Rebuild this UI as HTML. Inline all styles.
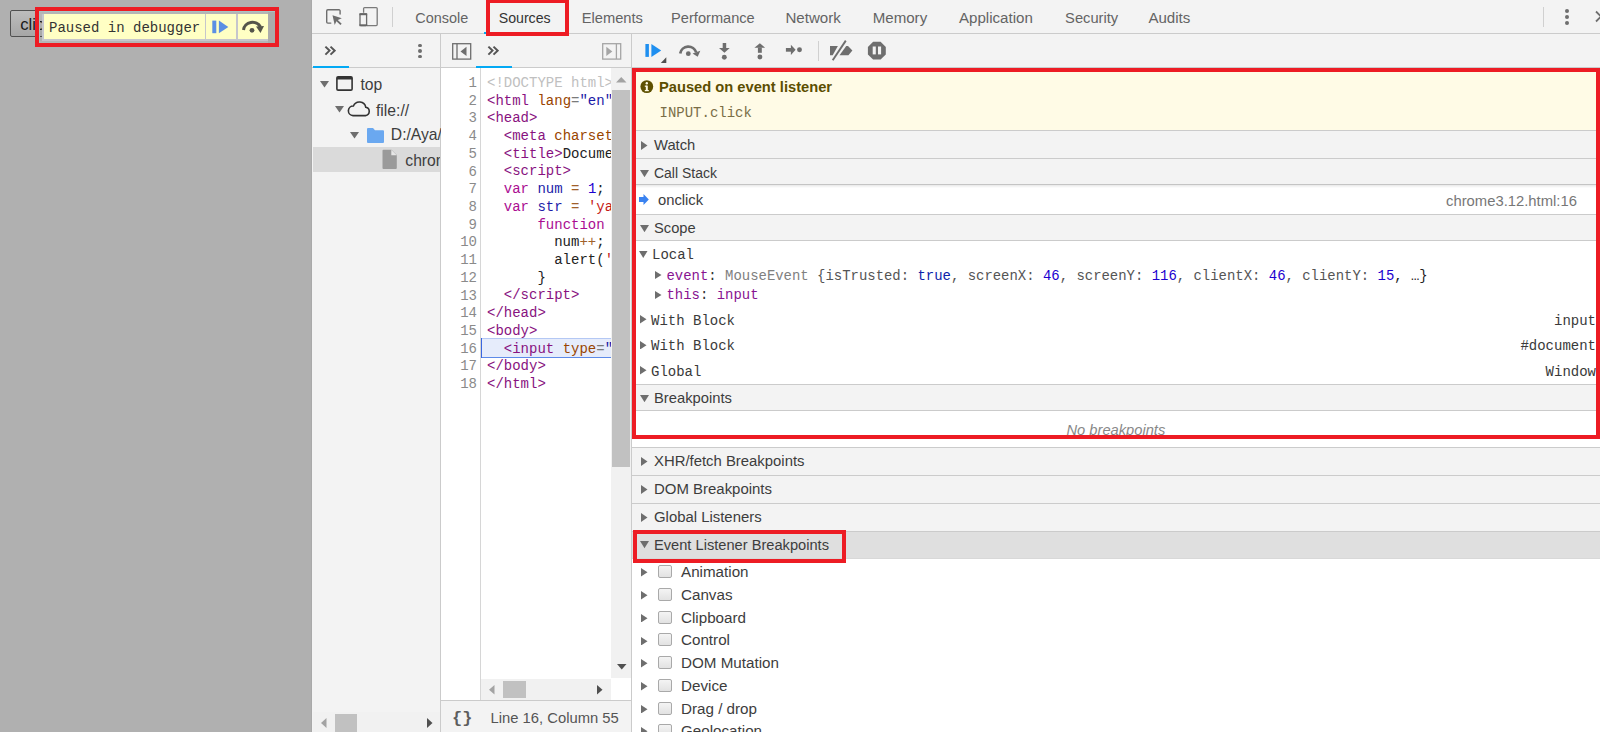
<!DOCTYPE html><html><head><meta charset="utf-8"><style>
*{margin:0;padding:0;box-sizing:border-box}
html,body{width:1600px;height:732px;overflow:hidden}
body{position:relative;background:#b0b0b0;font-family:"Liberation Sans",sans-serif}
body div,body svg{position:absolute}
</style></head><body>
<div style="left:10px;top:10px;width:80px;height:27px;border:1px solid #505050;border-radius:2px;background:linear-gradient(#bdbdbd,#a6a6a6)"></div>
<div style="top:12.50px;font:16.6px/24px 'Liberation Sans', sans-serif;color:#1a1a1a;white-space:pre;left:20.3px;">click</div>
<div style="left:39px;top:11px;width:237px;height:33px;border:1px solid #a9c3c3"></div>
<div style="left:40px;top:12px;width:235px;height:2px;background:#b5b5b5"></div>
<div style="left:40px;top:41px;width:235px;height:2px;background:#b5b5b5"></div>
<div style="left:42px;top:13.5px;width:226px;height:27px;background:#c6c6cc"></div>
<div style="left:44px;top:14px;width:160.5px;height:25px;background:#ffffc4"></div>
<div style="left:206px;top:14px;width:30px;height:25px;background:#ffffc4"></div>
<div style="left:238px;top:14px;width:30px;height:25px;background:#ffffc4"></div>
<div style="left:268px;top:12px;width:7px;height:31px;background:#ababab"></div>
<div style="top:17.80px;font:14px/20px 'Liberation Mono', monospace;color:#333;white-space:pre;left:49px;">Paused in debugger</div>
<svg style="left:212px;top:20px" width="17" height="14" viewBox="0 0 17 14"><rect x="0.3" y="0.6" width="4" height="12.6" fill="#5b8fe4"/><path d="M6.9 0.6 L16.3 6.9 L6.9 13.2Z" fill="#5b8fe4"/></svg>
<svg style="left:241px;top:18px" width="26" height="18" viewBox="0 0 26 18"><path d="M2.5 12 A9 8.5 0 0 1 19.5 9" fill="none" stroke="#55554a" stroke-width="3"/><path d="M15 8.5 L23 8 L19.5 15Z" fill="#55554a"/><circle cx="11" cy="12.3" r="2.4" fill="#55554a"/></svg>
<div style="left:35px;top:7px;width:244px;height:40px;border:4px solid #ed1c24"></div>
<div style="left:311px;top:0px;width:1px;height:732px;background:#a9a9a9"></div>
<div style="left:312px;top:0px;width:1288px;height:732px;background:#f3f3f3"></div>
<div style="left:312px;top:33px;width:1288px;height:1px;background:#cbcbcb"></div>
<svg style="left:320px;top:2px" width="64" height="30" viewBox="320 2 64 30">
<path d="M330.8 23.1 H327.8 A1.1 1.1 0 0 1 326.7 22 V10.9 A1.1 1.1 0 0 1 327.8 9.8 H339 A1.1 1.1 0 0 1 340.1 10.9 V14" fill="none" stroke="#6e6e6e" stroke-width="1.4" stroke-linecap="round"/>
<path d="M332.5 15.2 L341.8 18.3 L337.8 19.9 L341.7 23.8 L340.4 25.1 L336.4 21.2 L334.7 24.9 Z" fill="#6e6e6e"/>
<path d="M363.6 12.8 V8.6 A1 1 0 0 1 364.6 7.6 H376.2 A1 1 0 0 1 377.2 8.6 V24.6 A1 1 0 0 1 376.2 25.6 H367" fill="none" stroke="#7a7a7a" stroke-width="1.3"/>
<rect x="360" y="13.9" width="6.6" height="11.7" rx="0.8" fill="none" stroke="#6a6a6a" stroke-width="1.3"/>
<rect x="359.4" y="13.3" width="7.8" height="1.9" fill="#666"/>
<rect x="359.4" y="24.3" width="7.8" height="1.9" fill="#666"/>
</svg>
<div style="left:392px;top:7px;width:1px;height:20px;background:#d0d0d0"></div>
<div style="top:7.70px;font:14.44px/21px 'Liberation Sans', sans-serif;color:#646464;white-space:pre;left:415.3px;">Console</div>
<div style="top:8.20px;font:14.17px/20px 'Liberation Sans', sans-serif;color:#333;white-space:pre;left:498.7px;">Sources</div>
<div style="top:7.70px;font:14.7px/21px 'Liberation Sans', sans-serif;color:#646464;white-space:pre;left:581.7px;">Elements</div>
<div style="top:7.70px;font:14.62px/21px 'Liberation Sans', sans-serif;color:#646464;white-space:pre;left:671.1px;">Performance</div>
<div style="top:6.70px;font:15.1px/22px 'Liberation Sans', sans-serif;color:#646464;white-space:pre;left:785.4000000000001px;">Network</div>
<div style="top:6.70px;font:15.1px/22px 'Liberation Sans', sans-serif;color:#646464;white-space:pre;left:872.7px;">Memory</div>
<div style="top:6.70px;font:15.1px/22px 'Liberation Sans', sans-serif;color:#646464;white-space:pre;left:959.0px;">Application</div>
<div style="top:7.70px;font:14.7px/21px 'Liberation Sans', sans-serif;color:#646464;white-space:pre;left:1065.1000000000001px;">Security</div>
<div style="top:6.70px;font:15.1px/22px 'Liberation Sans', sans-serif;color:#646464;white-space:pre;left:1148.4px;">Audits</div>
<div style="left:484px;top:32px;width:84px;height:2px;background:#03a9f4"></div>
<div style="left:1543px;top:7px;width:1px;height:20px;background:#d0d0d0"></div>
<div style="left:1564.7px;top:9px;width:4px;height:4px;border-radius:2px;background:#6e6e6e"></div>
<div style="left:1564.7px;top:15px;width:4px;height:4px;border-radius:2px;background:#6e6e6e"></div>
<div style="left:1564.7px;top:21px;width:4px;height:4px;border-radius:2px;background:#6e6e6e"></div>
<svg style="left:1594px;top:10px" width="10" height="13" viewBox="0 0 10 13"><path d="M2 1.5 L12 11.5 M12 1.5 L2 11.5" stroke="#6e6e6e" stroke-width="1.8"/></svg>
<div style="left:486px;top:-1px;width:83px;height:37px;border:4px solid #ed1c24"></div>
<div style="left:312px;top:67px;width:1288px;height:1px;background:#cbcbcb"></div>
<div style="left:440px;top:34px;width:1px;height:698px;background:#cbcbcb"></div>
<div style="left:631px;top:34px;width:1px;height:698px;background:#cbcbcb"></div>
<svg style="left:324px;top:45px" width="12" height="11" viewBox="0 0 12 11"><path d="M1.4 1.6 L5.5 5.6 L1.4 9.6 M6.5 1.6 L10.6 5.6 L6.5 9.6" fill="none" stroke="#555" stroke-width="2"/></svg>
<div style="left:418px;top:43.900000000000006px;width:3.6px;height:3.6px;border-radius:2px;background:#6e6e6e"></div>
<div style="left:418px;top:49.400000000000006px;width:3.6px;height:3.6px;border-radius:2px;background:#6e6e6e"></div>
<div style="left:418px;top:54.900000000000006px;width:3.6px;height:3.6px;border-radius:2px;background:#6e6e6e"></div>
<div style="left:313px;top:66px;width:36px;height:2px;background:#03a9f4"></div>
<svg style="left:452px;top:43px" width="20" height="17" viewBox="0 0 20 17"><rect x="0.7" y="0.7" width="18" height="15.4" fill="none" stroke="#6e6e6e" stroke-width="1.3"/><line x1="5" y1="0.7" x2="5" y2="16" stroke="#6e6e6e" stroke-width="1.3"/><path d="M14.5 3.8 L8.5 8.4 L14.5 13Z" fill="#6e6e6e"/></svg>
<svg style="left:487px;top:45px" width="12" height="11" viewBox="0 0 12 11"><path d="M1.4 1.6 L5.5 5.6 L1.4 9.6 M6.5 1.6 L10.6 5.6 L6.5 9.6" fill="none" stroke="#555" stroke-width="2"/></svg>
<div style="left:476px;top:66px;width:36px;height:2px;background:#03a9f4"></div>
<svg style="left:601.8px;top:43px" width="20" height="17" viewBox="0 0 20 17"><rect x="0.7" y="0.7" width="18" height="15.4" fill="none" stroke="#a5a5a5" stroke-width="1.3"/><line x1="14.4" y1="0.7" x2="14.4" y2="16" stroke="#a5a5a5" stroke-width="1.3"/><path d="M4.3 3.8 L10.3 8.4 L4.3 13Z" fill="#a5a5a5"/></svg>
<svg style="left:636px;top:36px" width="260" height="30" viewBox="636 36 260 30">
<rect x="645.4" y="44" width="3.5" height="12.9" fill="#1f8ff0"/>
<path d="M651.4 44 L661.2 50.45 L651.4 56.9Z" fill="#1f8ff0"/>
<path d="M666.3 57.3 V63 H660.8Z" fill="#505050"/>
<path d="M680.2 53.4 A8.25 8.25 0 0 1 696.2 52.4" fill="none" stroke="#6e6e6e" stroke-width="2.7"/>
<path d="M692.6 53.4 L700.3 50.8 L697.7 56.8Z" fill="#6e6e6e"/>
<circle cx="688.3" cy="53.7" r="2.4" fill="#6e6e6e"/>
<rect x="722.7" y="43" width="3.5" height="5.5" fill="#6e6e6e"/>
<path d="M719 48 H729.7 L724.45 52.8Z" fill="#6e6e6e"/>
<circle cx="724.3" cy="57.2" r="2.45" fill="#6e6e6e"/>
<rect x="757.9" y="47.5" width="3.9" height="5.3" fill="#6e6e6e"/>
<path d="M754.4 47.8 H765.1 L759.85 43.2Z" fill="#6e6e6e"/>
<circle cx="759.9" cy="57" r="2.45" fill="#6e6e6e"/>
<rect x="785.9" y="48" width="5.3" height="3.7" fill="#6e6e6e"/>
<path d="M790.9 44.75 L795.6 49.85 L790.9 55Z" fill="#6e6e6e"/>
<circle cx="799.5" cy="49.8" r="2.45" fill="#6e6e6e"/>
<rect x="818" y="41" width="1" height="20" fill="#d0d0d0"/>
<path d="M830 46 H837.9 L832.7 55.25 H830Z" fill="#6e6e6e"/>
<path d="M839.5 55.25 L846.25 46 H848 L852.4 50.5 L848.4 55.25Z" fill="#6e6e6e"/>
<line x1="832.7" y1="60.3" x2="845.8" y2="40.6" stroke="#6e6e6e" stroke-width="1.9"/>
<path d="M871.3 41.7 H878.7 L885.8 48.8 V56.2 L878.7 59.6 H871.3 L867.9 56.2 V48.8 L871.3 41.7Z" fill="none"/>
<path d="M873.1 41.7 H880.6 L885.8 46.9 V54.4 L880.6 59.6 H873.1 L867.9 54.4 V46.9Z" fill="#6e6e6e"/>
<rect x="872.7" y="46.5" width="3.1" height="7.9" fill="#f3f3f3"/>
<rect x="878" y="46.5" width="3.1" height="7.9" fill="#f3f3f3"/>
</svg>
<svg style="left:320px;top:81px" width="9" height="6.5" viewBox="0 0 9 6.5"><path d="M0 0 H9 L4.5 6.5Z" fill="#6e6e6e"/></svg>
<svg style="left:336px;top:76px" width="17" height="15" viewBox="0 0 17 15"><rect x="0.9" y="0.9" width="15.2" height="13.2" rx="1.2" fill="none" stroke="#333" stroke-width="1.6"/><rect x="0.9" y="0.9" width="15.2" height="2.6" fill="#333"/></svg>
<div style="top:73.70px;font:15.7px/22px 'Liberation Sans', sans-serif;color:#3d3d3d;white-space:pre;left:360.5px;">top</div>
<svg style="left:335px;top:106.3px" width="9" height="6.5" viewBox="0 0 9 6.5"><path d="M0 0 H9 L4.5 6.5Z" fill="#6e6e6e"/></svg>
<svg style="left:347px;top:101px" width="24" height="16" viewBox="0 0 24 16"><path d="M6 14.6 H18.5 A4.2 4.2 0 0 0 18.8 6.3 A6.5 6.5 0 0 0 6.4 5 A4.8 4.8 0 0 0 6 14.6Z" fill="none" stroke="#333" stroke-width="1.6"/></svg>
<div style="top:99.50px;font:15.7px/22px 'Liberation Sans', sans-serif;color:#3d3d3d;white-space:pre;left:376px;">file://</div>
<svg style="left:350px;top:132px" width="9" height="6.5" viewBox="0 0 9 6.5"><path d="M0 0 H9 L4.5 6.5Z" fill="#6e6e6e"/></svg>
<svg style="left:366px;top:127px" width="19" height="17" viewBox="0 0 19 17"><path d="M1 2 A1 1 0 0 1 2 1 H7 L9 3.2 H17 A1 1 0 0 1 18 4.2 V15 A1 1 0 0 1 17 16 H2 A1 1 0 0 1 1 15Z" fill="#6aa8f0"/></svg>
<div style="top:124.10px;font:15.7px/22px 'Liberation Sans', sans-serif;color:#3d3d3d;white-space:pre;left:390.8px;width:50px;overflow:hidden">D:/Aya/chrome</div>
<div style="left:313px;top:147px;width:127px;height:25px;background:#dadada"></div>
<svg style="left:381px;top:149px" width="17" height="21" viewBox="0 0 17 21"><path d="M1.5 1.5 A1 1 0 0 1 2.5 0.8 H10.5 L15.8 6 V19 A1 1 0 0 1 14.8 20 H2.5 A1 1 0 0 1 1.5 19Z" fill="#9a9a9a"/><path d="M10.3 0.8 V6.2 H15.8" fill="#e6e6e6"/></svg>
<div style="top:149.90px;font:15.7px/22px 'Liberation Sans', sans-serif;color:#3d3d3d;white-space:pre;left:405.3px;width:35px;overflow:hidden">chrome3.12.html</div>
<div style="left:313px;top:712px;width:127px;height:20px;background:#f1f1f1"></div>
<div style="left:335px;top:714px;width:22px;height:18px;background:#c1c1c1"></div>
<svg style="left:321px;top:718px" width="6" height="10" viewBox="0 0 6 10"><path d="M5.5 0 V10 L0 5Z" fill="#a3a3a3"/></svg>
<svg style="left:427px;top:718px" width="6" height="10" viewBox="0 0 6 10"><path d="M0 0 V10 L5.5 5Z" fill="#505050"/></svg>
<div style="left:441px;top:68px;width:190px;height:632px;background:#fff"></div>
<div style="left:480px;top:68px;width:1px;height:632px;background:#d6d6d6"></div>
<div style="left:481px;top:338px;width:130px;height:20px;background:#e6ecfb;border-top:1px solid #b4c8f4;border-bottom:1px solid #5d8ae8"></div>
<div style="left:480.5px;top:338px;width:1.5px;height:20px;background:#3a66e0"></div>
<div style="left:441px;top:68px;width:170px;height:611px;overflow:hidden">
<div style="top:4.80px;font:14px/20px 'Liberation Mono', monospace;color:#222;white-space:pre;left:46px;"><span style="color:#c0c0c0">&lt;!DOCTYPE html&gt;</span></div>
<div style="top:4.90px;font:14px/20px 'Liberation Mono', monospace;color:#8a8a8a;white-space:pre;right:134px;">1</div>
<div style="top:22.52px;font:14px/20px 'Liberation Mono', monospace;color:#222;white-space:pre;left:46px;"><span style="color:#881280">&lt;html</span><span style="color:#222"> </span><span style="color:#994500">lang</span><span style="color:#7a7a7a">=</span><span style="color:#1a1aa6">&quot;en&quot;</span><span style="color:#881280">&gt;</span></div>
<div style="top:22.62px;font:14px/20px 'Liberation Mono', monospace;color:#8a8a8a;white-space:pre;right:134px;">2</div>
<div style="top:40.24px;font:14px/20px 'Liberation Mono', monospace;color:#222;white-space:pre;left:46px;"><span style="color:#881280">&lt;head&gt;</span></div>
<div style="top:40.34px;font:14px/20px 'Liberation Mono', monospace;color:#8a8a8a;white-space:pre;right:134px;">3</div>
<div style="top:57.96px;font:14px/20px 'Liberation Mono', monospace;color:#222;white-space:pre;left:46px;"><span style="color:#222">  </span><span style="color:#881280">&lt;meta</span><span style="color:#222"> </span><span style="color:#994500">charset</span></div>
<div style="top:58.06px;font:14px/20px 'Liberation Mono', monospace;color:#8a8a8a;white-space:pre;right:134px;">4</div>
<div style="top:75.68px;font:14px/20px 'Liberation Mono', monospace;color:#222;white-space:pre;left:46px;"><span style="color:#222">  </span><span style="color:#881280">&lt;title&gt;</span><span style="color:#222">Document</span></div>
<div style="top:75.78px;font:14px/20px 'Liberation Mono', monospace;color:#8a8a8a;white-space:pre;right:134px;">5</div>
<div style="top:93.40px;font:14px/20px 'Liberation Mono', monospace;color:#222;white-space:pre;left:46px;"><span style="color:#222">  </span><span style="color:#881280">&lt;script&gt;</span></div>
<div style="top:93.50px;font:14px/20px 'Liberation Mono', monospace;color:#8a8a8a;white-space:pre;right:134px;">6</div>
<div style="top:111.12px;font:14px/20px 'Liberation Mono', monospace;color:#222;white-space:pre;left:46px;"><span style="color:#222">  </span><span style="color:#aa0d91">var</span><span style="color:#222"> </span><span style="color:#1c1ca8">num</span><span style="color:#222"> </span><span style="color:#a0602a">=</span><span style="color:#222"> </span><span style="color:#1c00cf">1</span><span style="color:#222">;</span></div>
<div style="top:111.22px;font:14px/20px 'Liberation Mono', monospace;color:#8a8a8a;white-space:pre;right:134px;">7</div>
<div style="top:128.84px;font:14px/20px 'Liberation Mono', monospace;color:#222;white-space:pre;left:46px;"><span style="color:#222">  </span><span style="color:#aa0d91">var</span><span style="color:#222"> </span><span style="color:#1c1ca8">str</span><span style="color:#222"> </span><span style="color:#a0602a">=</span><span style="color:#222"> </span><span style="color:#c41a16">&#x27;yaya&#x27;</span></div>
<div style="top:128.94px;font:14px/20px 'Liberation Mono', monospace;color:#8a8a8a;white-space:pre;right:134px;">8</div>
<div style="top:146.56px;font:14px/20px 'Liberation Mono', monospace;color:#222;white-space:pre;left:46px;"><span style="color:#222">      </span><span style="color:#aa0d91">function</span></div>
<div style="top:146.66px;font:14px/20px 'Liberation Mono', monospace;color:#8a8a8a;white-space:pre;right:134px;">9</div>
<div style="top:164.28px;font:14px/20px 'Liberation Mono', monospace;color:#222;white-space:pre;left:46px;"><span style="color:#222">        </span><span style="color:#222">num</span><span style="color:#a0602a">++</span><span style="color:#222">;</span></div>
<div style="top:164.38px;font:14px/20px 'Liberation Mono', monospace;color:#8a8a8a;white-space:pre;right:134px;">10</div>
<div style="top:182.00px;font:14px/20px 'Liberation Mono', monospace;color:#222;white-space:pre;left:46px;"><span style="color:#222">        </span><span style="color:#222">alert</span><span style="color:#222">(</span><span style="color:#c41a16">&#x27;</span></div>
<div style="top:182.10px;font:14px/20px 'Liberation Mono', monospace;color:#8a8a8a;white-space:pre;right:134px;">11</div>
<div style="top:199.72px;font:14px/20px 'Liberation Mono', monospace;color:#222;white-space:pre;left:46px;"><span style="color:#222">      </span><span style="color:#222">}</span></div>
<div style="top:199.82px;font:14px/20px 'Liberation Mono', monospace;color:#8a8a8a;white-space:pre;right:134px;">12</div>
<div style="top:217.44px;font:14px/20px 'Liberation Mono', monospace;color:#222;white-space:pre;left:46px;"><span style="color:#222">  </span><span style="color:#881280">&lt;/script&gt;</span></div>
<div style="top:217.54px;font:14px/20px 'Liberation Mono', monospace;color:#8a8a8a;white-space:pre;right:134px;">13</div>
<div style="top:235.16px;font:14px/20px 'Liberation Mono', monospace;color:#222;white-space:pre;left:46px;"><span style="color:#881280">&lt;/head&gt;</span></div>
<div style="top:235.26px;font:14px/20px 'Liberation Mono', monospace;color:#8a8a8a;white-space:pre;right:134px;">14</div>
<div style="top:252.88px;font:14px/20px 'Liberation Mono', monospace;color:#222;white-space:pre;left:46px;"><span style="color:#881280">&lt;body&gt;</span></div>
<div style="top:252.98px;font:14px/20px 'Liberation Mono', monospace;color:#8a8a8a;white-space:pre;right:134px;">15</div>
<div style="top:270.60px;font:14px/20px 'Liberation Mono', monospace;color:#222;white-space:pre;left:46px;"><span style="color:#222">  </span><span style="color:#881280">&lt;input</span><span style="color:#222"> </span><span style="color:#994500">type</span><span style="color:#7a7a7a">=</span><span style="color:#1a1aa6">&quot;button&quot;</span></div>
<div style="top:270.70px;font:14px/20px 'Liberation Mono', monospace;color:#8a8a8a;white-space:pre;right:134px;">16</div>
<div style="top:288.32px;font:14px/20px 'Liberation Mono', monospace;color:#222;white-space:pre;left:46px;"><span style="color:#881280">&lt;/body&gt;</span></div>
<div style="top:288.42px;font:14px/20px 'Liberation Mono', monospace;color:#8a8a8a;white-space:pre;right:134px;">17</div>
<div style="top:306.04px;font:14px/20px 'Liberation Mono', monospace;color:#222;white-space:pre;left:46px;"><span style="color:#881280">&lt;/html&gt;</span></div>
<div style="top:306.14px;font:14px/20px 'Liberation Mono', monospace;color:#8a8a8a;white-space:pre;right:134px;">18</div>
</div>
<div style="left:611px;top:68px;width:20px;height:610px;background:#f1f1f1"></div>
<div style="left:612px;top:90px;width:18px;height:377px;background:#c1c1c1"></div>
<svg style="left:616px;top:77px" width="11" height="6" viewBox="0 0 11 6"><path d="M0 5.5 H10.5 L5.25 0Z" fill="#a3a3a3"/></svg>
<svg style="left:617px;top:664px" width="10" height="6" viewBox="0 0 10 6"><path d="M0 0 H9.5 L4.75 5.5Z" fill="#505050"/></svg>
<div style="left:481px;top:679px;width:130px;height:21px;background:#f1f1f1"></div>
<div style="left:503px;top:681px;width:23px;height:17px;background:#c1c1c1"></div>
<svg style="left:489px;top:684.5px" width="6" height="10" viewBox="0 0 6 10"><path d="M5.5 0 V9.5 L0 4.75Z" fill="#a3a3a3"/></svg>
<svg style="left:597px;top:684.5px" width="6" height="10" viewBox="0 0 6 10"><path d="M0 0 V9.5 L5.5 4.75Z" fill="#505050"/></svg>
<div style="left:611px;top:678px;width:20px;height:22px;background:#fff"></div>
<div style="left:441px;top:700px;width:190px;height:1px;background:#cbcbcb"></div>
<div style="left:441px;top:701px;width:190px;height:31px;background:#f3f3f3"></div>
<div style="top:707.10px;font:bold 17px/24px 'Liberation Mono', monospace;color:#5e5e5e;white-space:pre;left:452px;">{}</div>
<div style="top:707.50px;font:14.8px/21px 'Liberation Sans', sans-serif;color:#555;white-space:pre;left:490.5px;">Line 16, Column 55</div>
<div style="left:632px;top:68px;width:968px;height:62px;background:#fffbe6"></div>
<svg style="left:640px;top:80px" width="14" height="14" viewBox="0 0 14 14"><circle cx="6.8" cy="6.6" r="6.4" fill="#5e5000"/><rect x="5.8" y="5.6" width="2" height="5.3" fill="#fffbe6"/><rect x="4.8" y="10" width="4" height="1.2" fill="#fffbe6"/><rect x="4.8" y="5.6" width="2" height="1.2" fill="#fffbe6"/><circle cx="6.8" cy="3.2" r="1.2" fill="#fffbe6"/></svg>
<div style="top:77.20px;font:bold 14.69px/21px 'Liberation Sans', sans-serif;color:#5c4e00;white-space:pre;left:659px;">Paused on event listener</div>
<div style="top:103.20px;font:14px/20px 'Liberation Mono', monospace;color:#7a6e46;white-space:pre;left:659.5px;">INPUT.click</div>
<div style="left:632px;top:130px;width:968px;height:1px;background:#cbcbcb"></div>
<div style="left:632px;top:131px;width:968px;height:27px;background:#f3f3f3"></div>
<svg style="left:641.3px;top:141.1px" width="6.5" height="9" viewBox="0 0 6.5 9"><path d="M0 0 V9 L6.5 4.5Z" fill="#6e6e6e"/></svg>
<div style="top:135.10px;font:14.78px/21px 'Liberation Sans', sans-serif;color:#3d3d3d;white-space:pre;left:654px;">Watch</div>
<div style="left:632px;top:158px;width:968px;height:1px;background:#cbcbcb"></div>
<div style="left:632px;top:159px;width:968px;height:25px;background:#f3f3f3"></div>
<svg style="left:640px;top:169.70000000000002px" width="9" height="7.2" viewBox="0 0 9 7.2"><path d="M0 0 H9 L4.5 7.2Z" fill="#6e6e6e"/></svg>
<div style="top:163.30px;font:13.97px/20px 'Liberation Sans', sans-serif;color:#3d3d3d;white-space:pre;left:654px;">Call Stack</div>
<div style="left:632px;top:185px;width:968px;height:29px;background:#fff"></div>
<div style="left:632px;top:184px;width:968px;height:1px;background:#c4c4c4"></div>
<div style="left:632px;top:185px;width:968px;height:3px;background:linear-gradient(rgba(0,0,0,0.09),rgba(0,0,0,0))"></div>
<svg style="left:639px;top:194px" width="10" height="11" viewBox="0 0 10 11"><path d="M0 3 H4.5 V0 L9.8 5.5 L4.5 11 V8 H0Z" fill="#3a82f0"/></svg>
<div style="top:189.80px;font:14.77px/21px 'Liberation Sans', sans-serif;color:#3d3d3d;white-space:pre;left:658px;">onclick</div>
<div style="top:191.20px;font:14.82px/21px 'Liberation Sans', sans-serif;color:#777;white-space:pre;left:1446px;">chrome3.12.html:16</div>
<div style="left:632px;top:214px;width:968px;height:1px;background:#cbcbcb"></div>
<div style="left:632px;top:215px;width:968px;height:25px;background:#f3f3f3"></div>
<div style="left:632px;top:240px;width:968px;height:1px;background:#cbcbcb"></div>
<svg style="left:640px;top:224.70000000000002px" width="9" height="7.2" viewBox="0 0 9 7.2"><path d="M0 0 H9 L4.5 7.2Z" fill="#6e6e6e"/></svg>
<div style="top:217.80px;font:14.7px/21px 'Liberation Sans', sans-serif;color:#3d3d3d;white-space:pre;left:654px;">Scope</div>
<div style="left:632px;top:241px;width:968px;height:143px;background:#fff"></div>
<svg style="left:639px;top:251.2px" width="8.5" height="7" viewBox="0 0 8.5 7"><path d="M0 0 H8.5 L4.25 7Z" fill="#6e6e6e"/></svg>
<div style="top:245.00px;font:14px/20px 'Liberation Mono', monospace;color:#3a3a3a;white-space:pre;left:652px;">Local</div>
<svg style="left:655.3px;top:270.7px" width="6.5" height="8" viewBox="0 0 6.5 8"><path d="M0 0 V8 L6.5 4.0Z" fill="#6e6e6e"/></svg>
<div style="top:265.80px;font:13.94px/20px 'Liberation Mono', monospace;color:#333;white-space:pre;left:666.5px;"><span style="color:#881391">event</span>: <span style="color:#808080">MouseEvent</span> <span style="color:#555">{isTrusted: </span><span style="color:#0d22aa">true</span><span style="color:#555">, screenX: </span><span style="color:#1c00cf">46</span><span style="color:#555">, screenY: </span><span style="color:#1c00cf">116</span><span style="color:#555">, clientX: </span><span style="color:#1c00cf">46</span><span style="color:#555">, clientY: </span><span style="color:#1c00cf">15</span><span style="color:#222">, …}</span></div>
<svg style="left:655.3px;top:290.5px" width="6.5" height="8" viewBox="0 0 6.5 8"><path d="M0 0 V8 L6.5 4.0Z" fill="#6e6e6e"/></svg>
<div style="top:285.20px;font:13.94px/20px 'Liberation Mono', monospace;color:#333;white-space:pre;left:666.5px;"><span style="color:#881391">this</span>: <span style="color:#881391">input</span></div>
<svg style="left:640px;top:315.1px" width="6.5" height="8.5" viewBox="0 0 6.5 8.5"><path d="M0 0 V8.5 L6.5 4.25Z" fill="#6e6e6e"/></svg>
<div style="top:310.60px;font:14px/20px 'Liberation Mono', monospace;color:#3a3a3a;white-space:pre;left:651px;">With Block</div>
<div style="top:310.60px;font:14px/20px 'Liberation Mono', monospace;color:#3a3a3a;white-space:pre;right:4px;">input</div>
<svg style="left:640px;top:340.7px" width="6.5" height="8.5" viewBox="0 0 6.5 8.5"><path d="M0 0 V8.5 L6.5 4.25Z" fill="#6e6e6e"/></svg>
<div style="top:336.20px;font:14px/20px 'Liberation Mono', monospace;color:#3a3a3a;white-space:pre;left:651px;">With Block</div>
<div style="top:336.20px;font:14px/20px 'Liberation Mono', monospace;color:#3a3a3a;white-space:pre;right:4px;">#document</div>
<svg style="left:640px;top:366.3px" width="6.5" height="8.5" viewBox="0 0 6.5 8.5"><path d="M0 0 V8.5 L6.5 4.25Z" fill="#6e6e6e"/></svg>
<div style="top:361.80px;font:14px/20px 'Liberation Mono', monospace;color:#3a3a3a;white-space:pre;left:651px;">Global</div>
<div style="top:361.80px;font:14px/20px 'Liberation Mono', monospace;color:#3a3a3a;white-space:pre;right:4px;">Window</div>
<div style="left:632px;top:384px;width:968px;height:1px;background:#cbcbcb"></div>
<div style="left:632px;top:385px;width:968px;height:25px;background:#f3f3f3"></div>
<div style="left:632px;top:410px;width:968px;height:1px;background:#cbcbcb"></div>
<svg style="left:640px;top:394.5px" width="9" height="7.2" viewBox="0 0 9 7.2"><path d="M0 0 H9 L4.5 7.2Z" fill="#6e6e6e"/></svg>
<div style="top:387.60px;font:14.77px/21px 'Liberation Sans', sans-serif;color:#3d3d3d;white-space:pre;left:654px;">Breakpoints</div>
<div style="left:632px;top:411px;width:968px;height:36px;background:#fff"></div>
<div style="top:419.70px;font:14.7px/21px 'Liberation Sans', sans-serif;color:#888;white-space:pre;left:1066.5px;font-style:italic">No breakpoints</div>
<div style="left:632px;top:447px;width:968px;height:1px;background:#cbcbcb"></div>
<div style="left:632px;top:448px;width:968px;height:27px;background:#f3f3f3"></div>
<svg style="left:641.3px;top:457.1px" width="6.5" height="9" viewBox="0 0 6.5 9"><path d="M0 0 V9 L6.5 4.5Z" fill="#6e6e6e"/></svg>
<div style="top:451.10px;font:14.88px/21px 'Liberation Sans', sans-serif;color:#3d3d3d;white-space:pre;left:654px;">XHR/fetch Breakpoints</div>
<div style="left:632px;top:475px;width:968px;height:1px;background:#cbcbcb"></div>
<div style="left:632px;top:476px;width:968px;height:27px;background:#f3f3f3"></div>
<svg style="left:641.3px;top:484.5px" width="6.5" height="9" viewBox="0 0 6.5 9"><path d="M0 0 V9 L6.5 4.5Z" fill="#6e6e6e"/></svg>
<div style="top:478.00px;font:14.96px/21px 'Liberation Sans', sans-serif;color:#3d3d3d;white-space:pre;left:654px;">DOM Breakpoints</div>
<div style="left:632px;top:503px;width:968px;height:1px;background:#cbcbcb"></div>
<div style="left:632px;top:504px;width:968px;height:27px;background:#f3f3f3"></div>
<svg style="left:641.3px;top:512.9px" width="6.5" height="9" viewBox="0 0 6.5 9"><path d="M0 0 V9 L6.5 4.5Z" fill="#6e6e6e"/></svg>
<div style="top:506.90px;font:14.9px/21px 'Liberation Sans', sans-serif;color:#3d3d3d;white-space:pre;left:654px;">Global Listeners</div>
<div style="left:632px;top:531px;width:968px;height:1px;background:#cbcbcb"></div>
<div style="left:632px;top:532px;width:968px;height:26px;background:#dfdfdf"></div>
<svg style="left:640px;top:541.4px" width="9" height="7.2" viewBox="0 0 9 7.2"><path d="M0 0 H9 L4.5 7.2Z" fill="#6e6e6e"/></svg>
<div style="top:534.50px;font:14.65px/21px 'Liberation Sans', sans-serif;color:#3d3d3d;white-space:pre;left:654px;">Event Listener Breakpoints</div>
<div style="left:632px;top:558px;width:968px;height:1px;background:#d8d8d8"></div>
<div style="left:632px;top:559px;width:968px;height:173px;background:#fff"></div>
<svg style="left:641px;top:568.4px" width="6.5" height="8.5" viewBox="0 0 6.5 8.5"><path d="M0 0 V8.5 L6.5 4.25Z" fill="#6e6e6e"/></svg>
<div style="left:658px;top:565.3px;width:14px;height:13px;background:linear-gradient(#f4f4f4,#e2e2e2);border:1px solid #a9a9a9;border-radius:2px"></div>
<div style="top:561.30px;font:15.2px/22px 'Liberation Sans', sans-serif;color:#3d3d3d;white-space:pre;left:681px;">Animation</div>
<svg style="left:641px;top:591.12px" width="6.5" height="8.5" viewBox="0 0 6.5 8.5"><path d="M0 0 V8.5 L6.5 4.25Z" fill="#6e6e6e"/></svg>
<div style="left:658px;top:588.02px;width:14px;height:13px;background:linear-gradient(#f4f4f4,#e2e2e2);border:1px solid #a9a9a9;border-radius:2px"></div>
<div style="top:584.02px;font:15.2px/22px 'Liberation Sans', sans-serif;color:#3d3d3d;white-space:pre;left:681px;">Canvas</div>
<svg style="left:641px;top:613.84px" width="6.5" height="8.5" viewBox="0 0 6.5 8.5"><path d="M0 0 V8.5 L6.5 4.25Z" fill="#6e6e6e"/></svg>
<div style="left:658px;top:610.74px;width:14px;height:13px;background:linear-gradient(#f4f4f4,#e2e2e2);border:1px solid #a9a9a9;border-radius:2px"></div>
<div style="top:606.74px;font:15.2px/22px 'Liberation Sans', sans-serif;color:#3d3d3d;white-space:pre;left:681px;">Clipboard</div>
<svg style="left:641px;top:636.56px" width="6.5" height="8.5" viewBox="0 0 6.5 8.5"><path d="M0 0 V8.5 L6.5 4.25Z" fill="#6e6e6e"/></svg>
<div style="left:658px;top:633.4599999999999px;width:14px;height:13px;background:linear-gradient(#f4f4f4,#e2e2e2);border:1px solid #a9a9a9;border-radius:2px"></div>
<div style="top:629.46px;font:15.2px/22px 'Liberation Sans', sans-serif;color:#3d3d3d;white-space:pre;left:681px;">Control</div>
<svg style="left:641px;top:659.28px" width="6.5" height="8.5" viewBox="0 0 6.5 8.5"><path d="M0 0 V8.5 L6.5 4.25Z" fill="#6e6e6e"/></svg>
<div style="left:658px;top:656.18px;width:14px;height:13px;background:linear-gradient(#f4f4f4,#e2e2e2);border:1px solid #a9a9a9;border-radius:2px"></div>
<div style="top:652.18px;font:15.2px/22px 'Liberation Sans', sans-serif;color:#3d3d3d;white-space:pre;left:681px;">DOM Mutation</div>
<svg style="left:641px;top:682.0px" width="6.5" height="8.5" viewBox="0 0 6.5 8.5"><path d="M0 0 V8.5 L6.5 4.25Z" fill="#6e6e6e"/></svg>
<div style="left:658px;top:678.9px;width:14px;height:13px;background:linear-gradient(#f4f4f4,#e2e2e2);border:1px solid #a9a9a9;border-radius:2px"></div>
<div style="top:674.90px;font:15.2px/22px 'Liberation Sans', sans-serif;color:#3d3d3d;white-space:pre;left:681px;">Device</div>
<svg style="left:641px;top:704.7199999999999px" width="6.5" height="8.5" viewBox="0 0 6.5 8.5"><path d="M0 0 V8.5 L6.5 4.25Z" fill="#6e6e6e"/></svg>
<div style="left:658px;top:701.6199999999999px;width:14px;height:13px;background:linear-gradient(#f4f4f4,#e2e2e2);border:1px solid #a9a9a9;border-radius:2px"></div>
<div style="top:697.62px;font:15.2px/22px 'Liberation Sans', sans-serif;color:#3d3d3d;white-space:pre;left:681px;">Drag / drop</div>
<svg style="left:641px;top:727.4399999999999px" width="6.5" height="8.5" viewBox="0 0 6.5 8.5"><path d="M0 0 V8.5 L6.5 4.25Z" fill="#6e6e6e"/></svg>
<div style="left:658px;top:724.3399999999999px;width:14px;height:13px;background:linear-gradient(#f4f4f4,#e2e2e2);border:1px solid #a9a9a9;border-radius:2px"></div>
<div style="top:720.34px;font:15.2px/22px 'Liberation Sans', sans-serif;color:#3d3d3d;white-space:pre;left:681px;">Geolocation</div>
<div style="left:632px;top:68px;width:968px;height:371px;border:4px solid #ed1c24"></div>
<div style="left:633px;top:530px;width:213px;height:33px;border:4px solid #ed1c24"></div>
</body></html>
